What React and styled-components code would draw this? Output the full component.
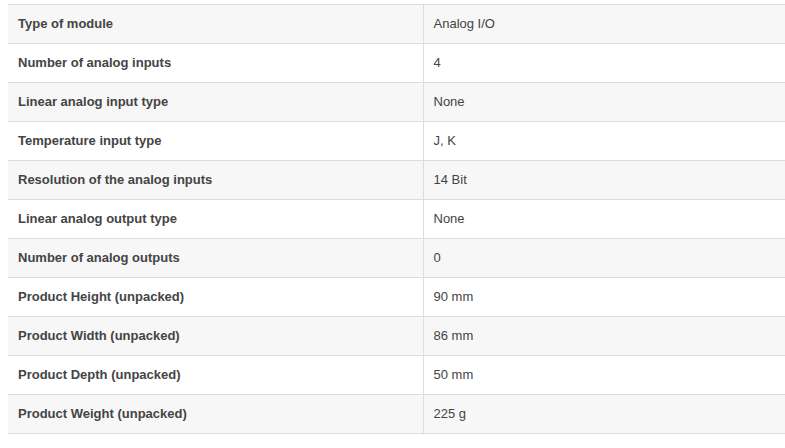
import styled, { createGlobalStyle } from "styled-components";

const GlobalStyle = createGlobalStyle`
    html, body {
        margin: 0;
        padding: 0;
        background: #fff;
    }
    body {
        font-family: "Liberation Sans", Arial, sans-serif;
    }
`

const Wrapper = styled.div`
    padding: 4px 0 0 8px;
`

const Table = styled.table`
    width: 100%;
    border-collapse: collapse;
    table-layout: fixed;
    color: #444;
    font-size: 13px;
`

const Row = styled.tr`
    background: ${({ $striped }) => $striped ? "#f7f7f7" : "#fff"};
    border-top: 1px solid #ddd;
    border-bottom: 1px solid #ddd;
`

const Label = styled.th`
    box-sizing: border-box;
    width: 415px;
    height: 36px;
    padding: 0 10px 2px;
    text-align: left;
    font-weight: bold;
    border-right: 1px solid #ddd;
`

const Value = styled.td`
    height: 36px;
    padding: 0 10px 2px;
    font-weight: normal;
`

const specs = [
    ["Type of module", "Analog I/O"],
    ["Number of analog inputs", "4"],
    ["Linear analog input type", "None"],
    ["Temperature input type", "J, K"],
    ["Resolution of the analog inputs", "14 Bit"],
    ["Linear analog output type", "None"],
    ["Number of analog outputs", "0"],
    ["Product Height (unpacked)", "90 mm"],
    ["Product Width (unpacked)", "86 mm"],
    ["Product Depth (unpacked)", "50 mm"],
    ["Product Weight (unpacked)", "225 g"],
]

export default function App() {
    return (
        <>
            <GlobalStyle/>
            <Wrapper>
                <Table>
                    <tbody>
                        {specs.map(([label, value], i) => (
                            <Row key={label} $striped={i % 2 === 0}>
                                <Label>{label}</Label>
                                <Value>{value}</Value>
                            </Row>
                        ))}
                    </tbody>
                </Table>
            </Wrapper>
        </>
    )
}
